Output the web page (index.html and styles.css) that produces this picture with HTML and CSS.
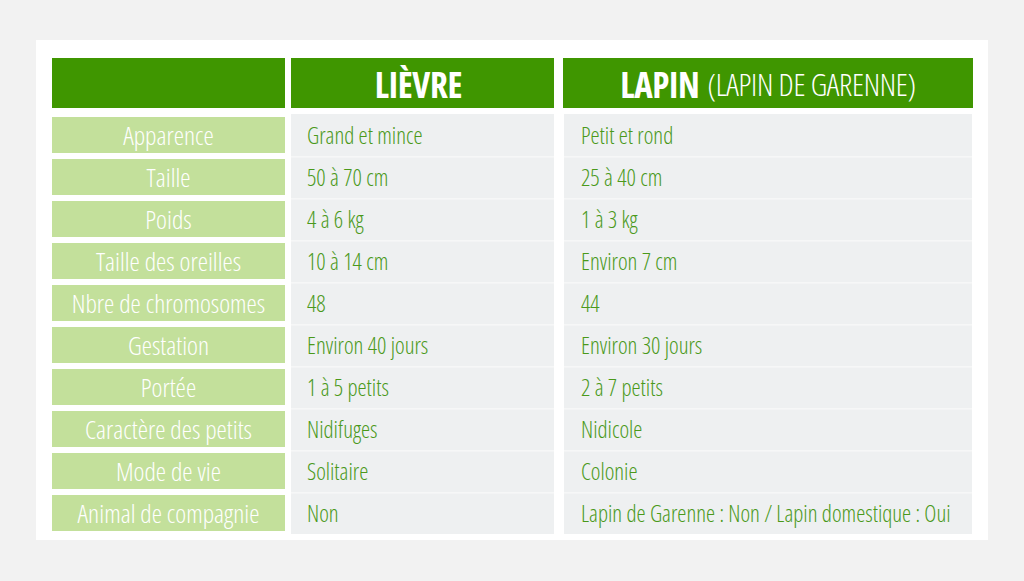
FILE: index.html
```html
<!DOCTYPE html>
<html lang="fr">
<head>
<meta charset="utf-8">
<title>Lièvre vs Lapin</title>
<link rel="stylesheet" href="styles.css">
</head>
<body>
<div class="card">
  <div class="table">
    <div class="head blank"></div>
    <div class="head"><b>LIÈVRE</b></div>
    <div class="head"><b>LAPIN</b> (LAPIN DE GARENNE)</div>

    <div class="row first"><span class="label">Apparence</span><span class="cell">Grand et mince</span><span class="cell">Petit et rond</span></div>
    <div class="row"><span class="label">Taille</span><span class="cell">50 à 70 cm</span><span class="cell">25 à 40 cm</span></div>
    <div class="row"><span class="label">Poids</span><span class="cell">4 à 6 kg</span><span class="cell">1 à 3 kg</span></div>
    <div class="row"><span class="label">Taille des oreilles</span><span class="cell">10 à 14 cm</span><span class="cell">Environ 7 cm</span></div>
    <div class="row"><span class="label">Nbre de chromosomes</span><span class="cell">48</span><span class="cell">44</span></div>
    <div class="row"><span class="label">Gestation</span><span class="cell">Environ 40 jours</span><span class="cell">Environ 30 jours</span></div>
    <div class="row"><span class="label">Portée</span><span class="cell">1 à 5 petits</span><span class="cell">2 à 7 petits</span></div>
    <div class="row"><span class="label">Caractère des petits</span><span class="cell">Nidifuges</span><span class="cell">Nidicole</span></div>
    <div class="row"><span class="label">Mode de vie</span><span class="cell">Solitaire</span><span class="cell">Colonie</span></div>
    <div class="row last"><span class="label">Animal de compagnie</span><span class="cell">Non</span><span class="cell">Lapin de Garenne : Non / Lapin domestique : Oui</span></div>
  </div>
</div>
</body>
</html>
```
FILE: styles.css
```css
html, body {
  margin: 0;
  padding: 0;
  background: #f2f2f2;
}
body {
  font-family: "Open Sans", "Liberation Sans", sans-serif;
  font-stretch: 75%;
}
.card {
  margin: 40px 0 0 36px;
  width: 952px;
  height: 500px;
  box-sizing: border-box;
  background: #ffffff;
  padding: 18px 15px 0 16px;
}
.table {
  display: grid;
  grid-template-columns: 233px 269px 419px;
}
.head {
  height: 50px;
  background: #3f9600;
  color: #ffffff;
  display: flex;
  align-items: center;
  justify-content: center;
  font-size: 31px;
  font-weight: 300;
  margin-bottom: 6px;
  white-space: nowrap;
  letter-spacing: -0.3px;
  padding-top: 2px;
  box-sizing: border-box;
}
.head b {
  font-size: 35px;
  font-weight: 700;
  margin-right: 8px;
}
.head:nth-child(2) { margin-left: 6px; }
.head:nth-child(3) { margin-left: 9px; }
.row {
  display: contents;
}
.label, .cell {
  height: 42px;
  display: flex;
  align-items: center;
  white-space: nowrap;
}
.label {
  height: 36px;
  margin: 3px 0;
  background: #c3e09b;
  color: #ffffff;
  justify-content: center;
  font-size: 26px;
  font-weight: 300;
}
.cell {
  background: #eef0f1;
  color: #4a991a;
  font-size: 23px;
  font-weight: 350;
  padding-left: 16px;
  box-shadow: inset 0 1px 0 #f6f7f7, inset 0 2px 1px #f3f4f5;
}
.row .cell:nth-child(2) { margin-left: 6px; }
.row .cell:nth-child(3) { margin-left: 10px; margin-right: 1px; padding-left: 17px; }
.row.first .cell { box-shadow: none; }
```
